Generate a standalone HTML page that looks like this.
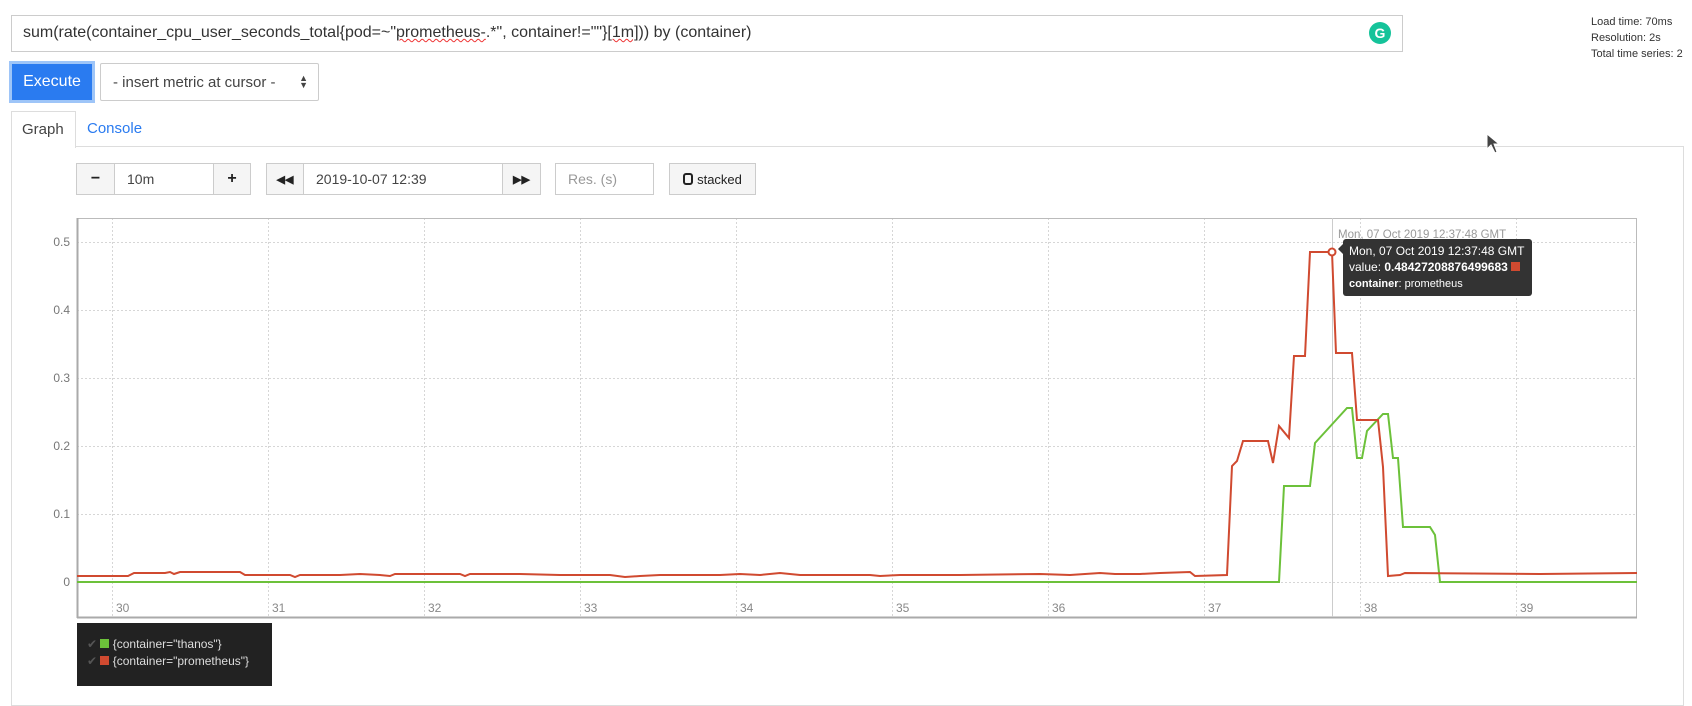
<!DOCTYPE html>
<html><head><meta charset="utf-8"><style>
*{box-sizing:border-box;margin:0;padding:0}
body{width:1692px;height:686px;background:#fff;font-family:"Liberation Sans",sans-serif;color:#333;position:relative;overflow:hidden}
.a{position:absolute}
.btn{position:absolute;background:#f5f5f5;border:1px solid #ccc;display:flex;align-items:center;justify-content:center;font-weight:bold;font-size:16px;color:#222}
.inp{position:absolute;background:#fff;border:1px solid #ccc;font-size:14px;color:#444;padding-left:12px;display:flex;align-items:center}
.stat{position:absolute;left:1591px;font-size:11px;color:#333}
</style></head><body>
<div class="a" style="left:11px;top:15px;width:1392px;height:37px;border:1px solid #ccc;font-size:16px;padding:8px 0 0 11px;color:#333">sum(rate(container_cpu_user_seconds_total{pod=~"<span style="text-decoration:underline wavy #e33;text-decoration-thickness:1px">prometheus-</span>.*", container!=""}<span style="text-decoration:underline wavy #e33;text-decoration-thickness:1px">[1m]</span>)) by (container)</div>
<div class="a" style="left:1369px;top:22px;width:22px;height:22px;border-radius:50%;background:#15c39a;color:#fff;font-size:14px;font-weight:bold;text-align:center;line-height:22px">G</div>
<div class="stat" style="top:16px">Load time: 70ms</div>
<div class="stat" style="top:32px">Resolution: 2s</div>
<div class="stat" style="top:48px">Total time series: 2</div>
<div class="a" style="left:9px;top:61px;width:86px;height:42px;background:#2a7bf0;border:3px solid #9ec5f8;color:#fff;font-size:16px;display:flex;align-items:center;justify-content:center">Execute</div>
<div class="a" style="left:100px;top:63px;width:219px;height:38px;border:1px solid #ccc;border-radius:2px;font-size:15px;display:flex;align-items:center;padding-left:12px;color:#444">- insert metric at cursor -<span style="position:absolute;right:10px;font-size:9px;line-height:7px">▲<br>▼</span></div>
<div class="a" style="left:11px;top:111px;width:65px;height:37px;border:1px solid #ddd;border-bottom:none;background:#fff;z-index:2;font-size:15px;padding:9px 0 0 10px;color:#444">Graph</div>
<div class="a" style="left:87px;top:120px;font-size:15px;color:#2a7bf0">Console</div>
<div class="a" style="left:11px;top:146px;width:1673px;height:560px;border:1px solid #ddd"></div>
<svg class="a" style="left:1486px;top:133px" width="14" height="22"><path d="M1 1 L1 16 L5 12 L9 20 L11 19 L8 11 L13 11 Z" fill="#444" stroke="#fff" stroke-width="1"/></svg>
<div class="btn" style="left:76px;top:163px;width:39px;height:32px">−</div>
<div class="inp" style="left:114px;top:163px;width:100px;height:32px">10m</div>
<div class="btn" style="left:213px;top:163px;width:38px;height:32px">+</div>
<div class="btn" style="left:266px;top:163px;width:38px;height:32px;font-size:11px">◀◀</div>
<div class="inp" style="left:303px;top:163px;width:200px;height:32px">2019-10-07 12:39</div>
<div class="btn" style="left:502px;top:163px;width:39px;height:32px;font-size:11px">▶▶</div>
<div class="inp" style="left:555px;top:163px;width:99px;height:32px;color:#999">Res. (s)</div>
<div class="btn" style="left:669px;top:163px;width:87px;height:32px;font-size:13px;font-weight:normal;gap:4px"><span style="display:inline-block;width:10px;height:12px;border:2px solid #222;border-radius:3px"></span>stacked</div>
<svg class="a" style="left:0;top:0" width="1692" height="686">
<g stroke="#d6d6d6" stroke-dasharray="2,2" stroke-width="1">
<line x1="77" x2="1637" y1="242.5" y2="242.5"/><line x1="77" x2="1637" y1="310.5" y2="310.5"/><line x1="77" x2="1637" y1="378.5" y2="378.5"/><line x1="77" x2="1637" y1="446.5" y2="446.5"/><line x1="77" x2="1637" y1="514.5" y2="514.5"/><line x1="77" x2="1637" y1="582.5" y2="582.5"/>
<line x1="112.5" x2="112.5" y1="218" y2="617"/><line x1="268.5" x2="268.5" y1="218" y2="617"/><line x1="424.5" x2="424.5" y1="218" y2="617"/><line x1="580.5" x2="580.5" y1="218" y2="617"/><line x1="736.5" x2="736.5" y1="218" y2="617"/><line x1="892.5" x2="892.5" y1="218" y2="617"/><line x1="1048.5" x2="1048.5" y1="218" y2="617"/><line x1="1204.5" x2="1204.5" y1="218" y2="617"/><line x1="1360.5" x2="1360.5" y1="218" y2="617"/><line x1="1516.5" x2="1516.5" y1="218" y2="617"/>
</g>
<path d="M77.5 218.5 H1636.5 V617.5 H77.5 Z" fill="none" stroke="#bbb"/>
<line x1="77.5" x2="77.5" y1="218" y2="618" stroke="#aaa" stroke-width="2"/>
<line x1="77" x2="1637" y1="617.5" y2="617.5" stroke="#aaa" stroke-width="2"/>
<line x1="1332.5" x2="1332.5" y1="218" y2="617" stroke="#ccc"/>
<g font-size="12" fill="#777" text-anchor="end">
<text x="70" y="246">0.5</text><text x="70" y="314">0.4</text><text x="70" y="382">0.3</text><text x="70" y="450">0.2</text><text x="70" y="518">0.1</text><text x="70" y="586">0</text></g>
<g font-size="12" fill="#888">
<text x="116" y="612">30</text><text x="272" y="612">31</text><text x="428" y="612">32</text><text x="584" y="612">33</text><text x="740" y="612">34</text><text x="896" y="612">35</text><text x="1052" y="612">36</text><text x="1208" y="612">37</text><text x="1364" y="612">38</text><text x="1520" y="612">39</text></g>
<text x="1338" y="238" font-size="11.5" fill="#999">Mon, 07 Oct 2019 12:37:48 GMT</text>
<polyline fill="none" stroke="#6cc13a" stroke-width="2" points="77,582 1279,582 1284,486 1310,486 1315,443 1347,408 1352,408 1357,458 1362,458 1367,431 1383,414 1388,414 1393,458 1398,458 1403,527 1430,527 1435,535 1440,582 1637,582"/>
<polyline fill="none" stroke="#d04a30" stroke-width="2" points="77,576 128,576 134,573 165,573 170,572 174,574 180,572 240,572 245,575 290,575 295,577 300,575 340,575 360,574 380,575 390,576 395,574 460,574 465,576 470,574 520,574 560,575 610,575 625,577 640,576 660,575 720,575 740,574 760,575 780,573 800,575 870,575 880,576 900,575 960,575 1040,574 1070,575 1100,573 1115,574 1140,574 1160,573 1190,572 1195,576 1227,575 1232,466 1237,461 1243,441 1268,441 1273,463 1279,426 1289,438 1294,356 1305,356 1310,252 1332,252 1336,353 1352,353 1357,420 1378,420 1383,467 1388,576 1400,575 1405,573 1540,574 1637,573"/>
<circle cx="1332" cy="252" r="3.5" fill="#fff" stroke="#d04a30" stroke-width="2"/>
</svg>
<div class="a" style="left:1343px;top:239px;width:189px;height:57px;background:#333;border-radius:3px;color:#fff;font-size:12px;padding:4px 6px;line-height:16px">Mon, 07 Oct 2019 12:37:48 GMT<br>value: <b>0.48427208876499683</b> <span style="display:inline-block;width:9px;height:9px;background:#d04a30"></span><br><span style="font-size:11px;line-height:13px"><b>container</b>: prometheus</span></div>
<div class="a" style="left:1338px;top:244px;width:0;height:0;border:5px solid transparent;border-right-color:#333;border-left:none"></div>
<div class="a" style="left:77px;top:623px;width:195px;height:63px;background:#222;color:#ddd;font-size:12px;padding:13px 0 0 10px;line-height:17px">
<div><span style="color:#555">✔</span> <span style="display:inline-block;width:9px;height:9px;background:#6cc13a"></span> {container="thanos"}</div>
<div><span style="color:#555">✔</span> <span style="display:inline-block;width:9px;height:9px;background:#d04a30"></span> {container="prometheus"}</div>
</div>
</body></html>
